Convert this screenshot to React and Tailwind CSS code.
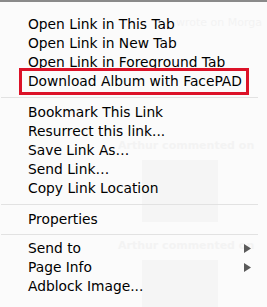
import React from "react";

const font = { fontFamily: '"DejaVu Sans", "Lucida Grande", sans-serif' };

function Item({ label, arrow }) {
  return (
    <div className="h-[19px] flex items-center pl-[28px] pr-[15px] text-[13.8px] text-black leading-none">
      <span className="flex-1 whitespace-nowrap">{label}</span>
      {arrow ? (
        <svg width="7" height="9" viewBox="0 0 7 9" className="mr-[1px]">
          <path d="M0 0 L7 4.5 L0 9 Z" fill="#5a5a5a" />
        </svg>
      ) : null}
    </div>
  );
}

function Sep({ tight }) {
  return (
    <div className={`${tight ? "h-[10px]" : "h-[12px]"} flex items-center pl-[1px] pr-[9px]`}>
      <div className="h-px w-full bg-[#e2e2e2]" />
    </div>
  );
}

export default function App() {
  return (
    <div className="relative w-[267px] h-[307px] overflow-hidden bg-[#fbfbfb] border-t-2 border-[#8a8a8a]" style={font}>
      {/* faint page content showing through the translucent menu */}
      <div className="absolute inset-0 text-[11px] font-bold text-[#f3f3f3] whitespace-nowrap pointer-events-none">
        <div className="absolute left-[176px] top-[13px] font-normal">wrote on Morga</div>
        <div className="absolute left-[118px] top-[136px]">Arthur commented on</div>
        <div className="absolute left-[118px] top-[236px]">Arthur commented on</div>
        <div className="absolute left-[142px] top-[158px] w-[76px] h-[62px] bg-[#f5f5f5]" />
        <div className="absolute left-[142px] top-[258px] w-[76px] h-[50px] bg-[#f5f5f5]" />
      </div>

      <div className="relative pt-[13px]">
        <Item label="Open Link in This Tab" />
        <Item label="Open Link in New Tab" />
        <Item label="Open Link in Foreground Tab" />
        <div className="relative">
          <Item label="Download Album with FacePAD" />
          <div className="absolute left-[19px] -top-[4px] w-[230px] h-[27px] border-[3px] border-[#dc1228]" />
        </div>
        <Sep />
        <Item label="Bookmark This Link" />
        <Item label="Resurrect this link..." />
        <Item label="Save Link As…" />
        <Item label="Send Link…" />
        <Item label="Copy Link Location" />
        <Sep />
        <Item label="Properties" />
        <Sep tight />
        <Item label="Send to" arrow />
        <Item label="Page Info" arrow />
        <Item label="Adblock Image..." />
      </div>
    </div>
  );
}
